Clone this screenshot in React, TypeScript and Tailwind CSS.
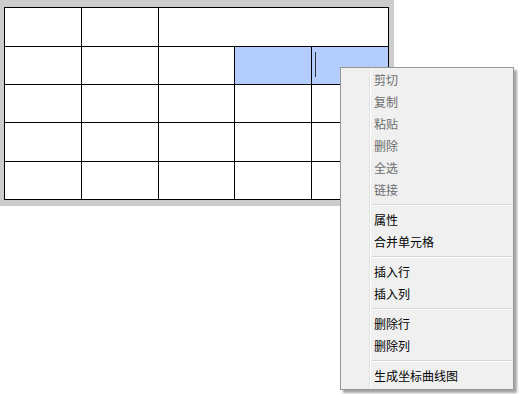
const rows: { span?: boolean; sel?: boolean }[][] = [
  [{}, {}, { span: true }],
  [{}, {}, {}, { sel: true }, { sel: true }],
  [{}, {}, {}, {}, {}],
  [{}, {}, {}, {}, {}],
  [{}, {}, {}, {}, {}],
];

type Item = { label: string; disabled?: boolean } | "sep";

const menu: Item[] = [
  { label: "剪切", disabled: true },
  { label: "复制", disabled: true },
  { label: "粘贴", disabled: true },
  { label: "删除", disabled: true },
  { label: "全选", disabled: true },
  { label: "链接", disabled: true },
  "sep",
  { label: "属性" },
  { label: "合并单元格" },
  "sep",
  { label: "插入行" },
  { label: "插入列" },
  "sep",
  { label: "删除行" },
  { label: "删除列" },
  "sep",
  { label: "生成坐标曲线图" },
];

export default function App() {
  return (
    <div className="relative w-[529px] h-[394px] bg-white" style={{ fontFamily: '"Noto Sans CJK SC", "Noto Sans", sans-serif' }}>
      {/* Editor frame */}
      <div className="w-[394px] h-[206px] bg-[#cccccc] pt-[7px] pl-[4px]">
        <div className="grid grid-cols-[76px_76px_75px_76px_76px] grid-rows-[38px_37px_37px_38px_37px] gap-px p-px bg-black w-[385px]">
          {rows.map((r, i) =>
            r.map((c, j) => (
              <div
                key={`${i}-${j}`}
                className={`${c.span ? "col-span-3" : ""} ${c.sel ? "bg-[#b3cdfe]" : "bg-white"} flex items-start`}
              >
                {i === 1 && j === 4 && <div className="ml-[3px] mt-[5px] w-px h-[25px] bg-[#333]" />}
              </div>
            ))
          )}
        </div>
      </div>

      {/* Context menu */}
      <div className="absolute left-[340px] top-[67px] w-[174px] h-[323px] bg-[#f0f0f0] border border-[#979797] shadow-[3px_3px_2px_rgba(0,0,0,0.35)] flex py-[1px]">
        <div className="w-[29px] shrink-0 border-r border-[#e2e3e3]" />
        <div className="flex-1 border-l border-white pr-[1px]">
          {menu.map((m, i) =>
            m === "sep" ? (
              <div key={i} className="h-[8px] flex flex-col justify-center">
                <div className="h-px bg-[#d7d7d7]" />
                <div className="h-px bg-white" />
              </div>
            ) : (
              <div
                key={i}
                className={`h-[22px] flex items-center pl-[3px] text-[12px] ${m.disabled ? "text-[#6d6d6d]" : "text-black"}`}
              >
                {m.label}
              </div>
            )
          )}
        </div>
      </div>
    </div>
  );
}
